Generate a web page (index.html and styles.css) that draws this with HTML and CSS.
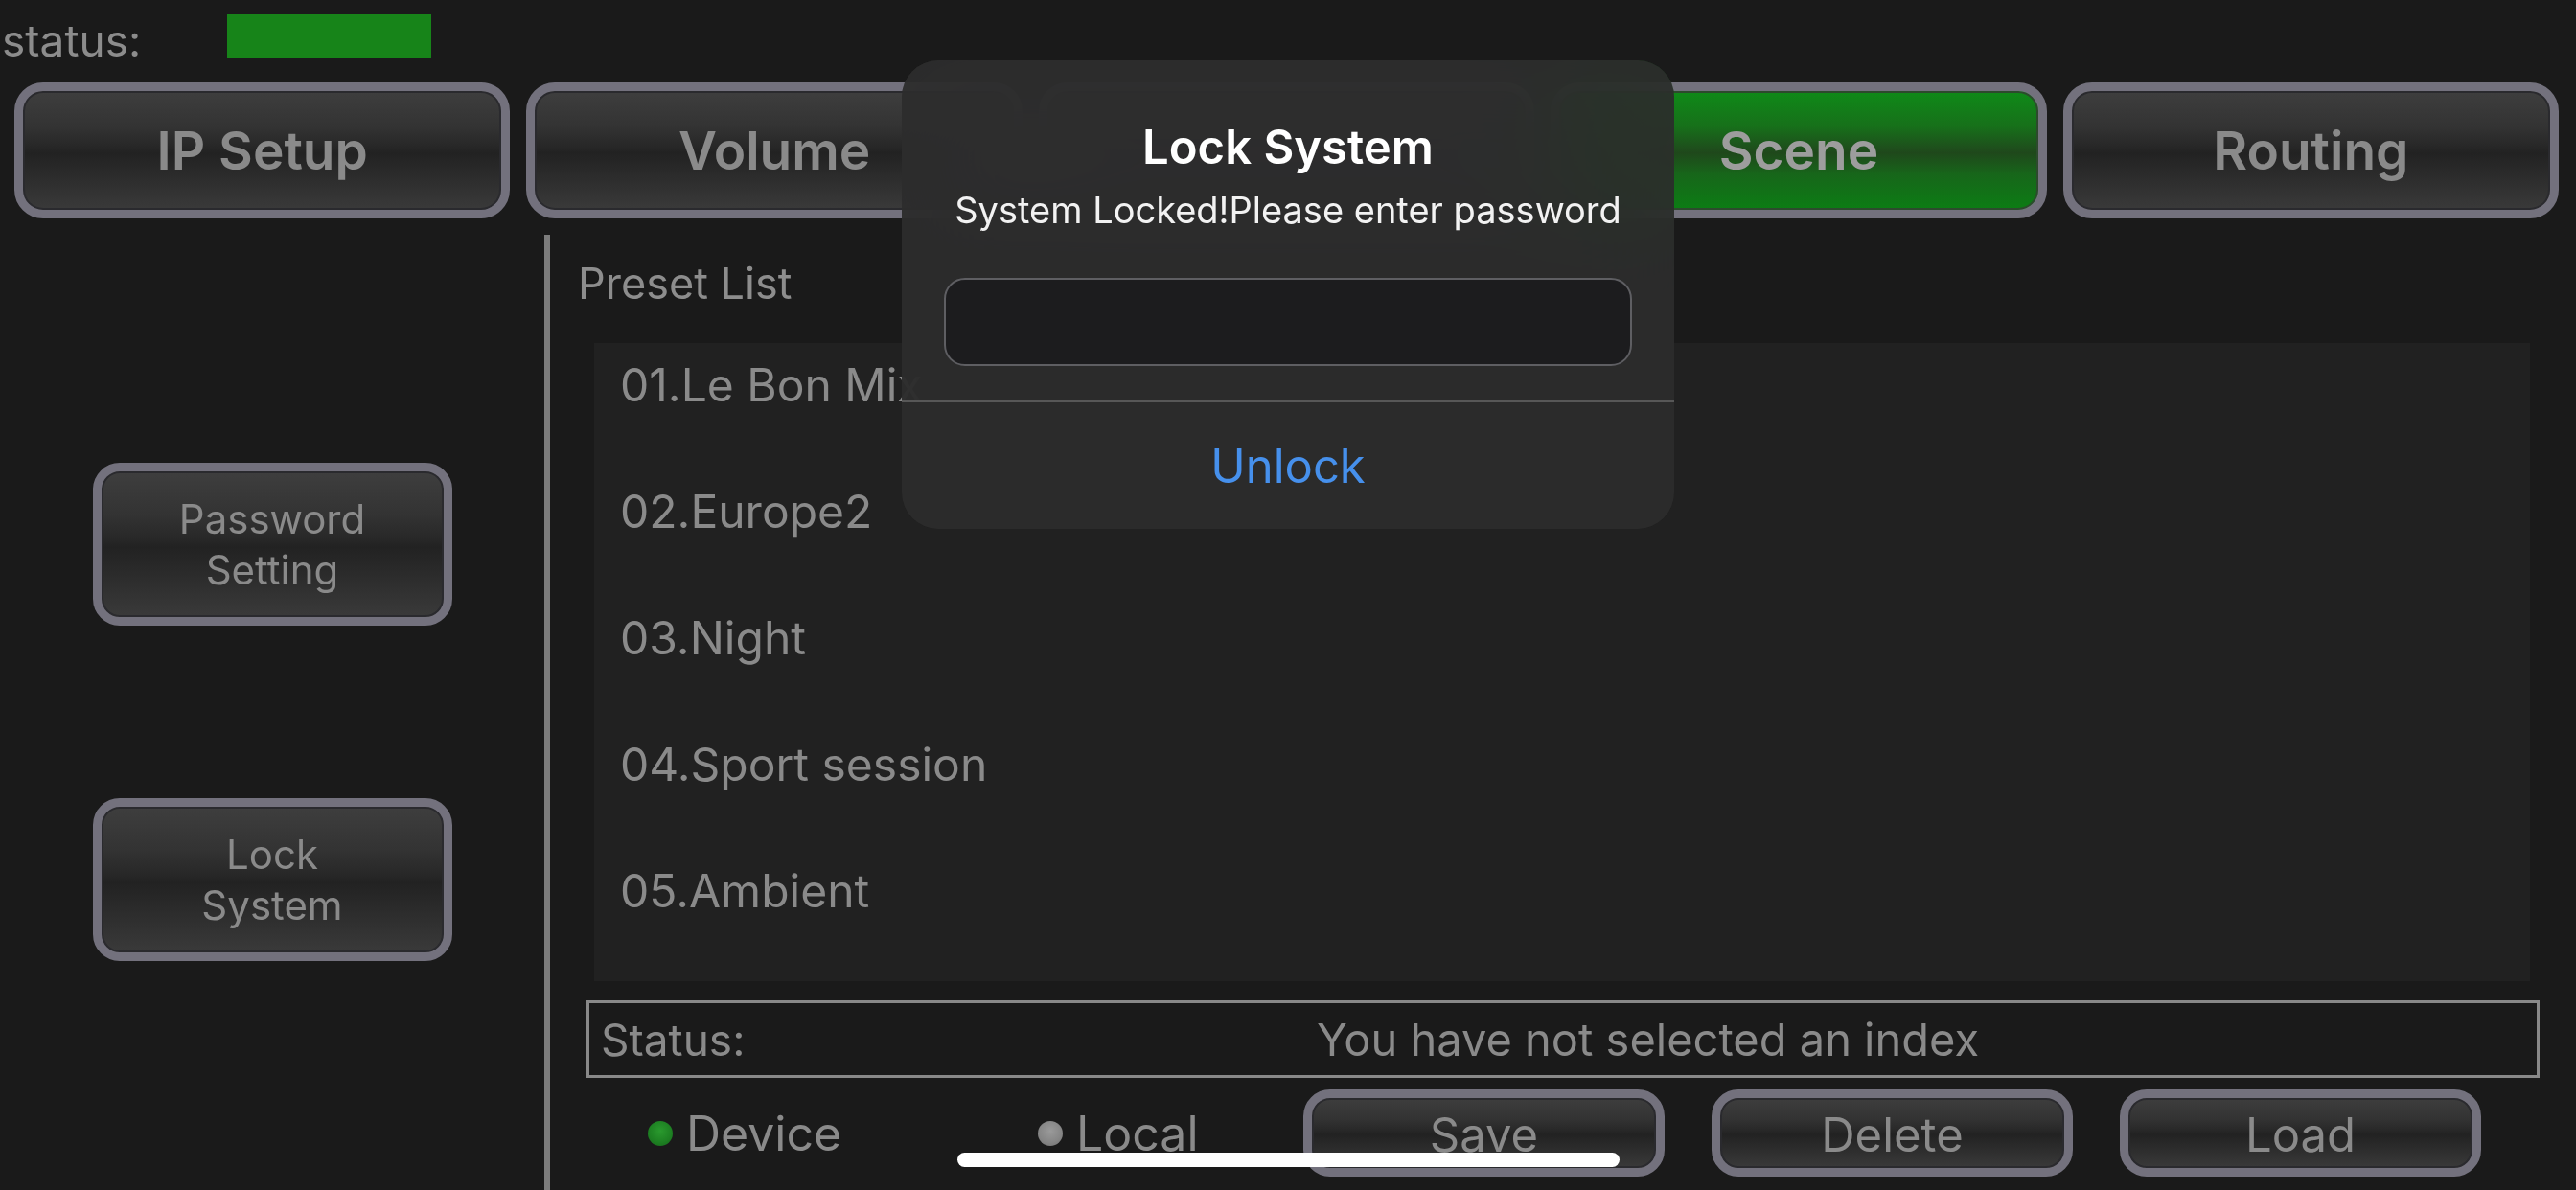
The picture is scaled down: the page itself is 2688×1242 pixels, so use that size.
FILE: index.html
```html
<!DOCTYPE html>
<html>
<head>
<meta charset="utf-8">
<link rel="stylesheet" href="styles.css">
</head>
<body>
<div class="screen">
  <div class="topbar">
    <span class="status-label">status:</span>
    <span class="status-led"></span>
  </div>
  <div class="tabs">
    <div class="gbtn tab">IP Setup</div>
    <div class="gbtn tab">Volume</div>
    <div class="gbtn tab"></div>
    <div class="gbtn tab tab-active">Scene</div>
    <div class="gbtn tab">Routing</div>
  </div>
  <div class="main">
    <div class="side">
      <div class="gbtn side-btn">Password<br>Setting</div>
      <div class="gbtn side-btn">Lock<br>System</div>
    </div>
    <div class="panel">
      <div class="panel-title">Preset List</div>
      <div class="list">
        <div class="row">01.Le Bon Mix</div>
        <div class="row">02.Europe2</div>
        <div class="row">03.Night</div>
        <div class="row">04.Sport session</div>
        <div class="row">05.Ambient</div>
      </div>
      <div class="status-box">
        <span class="sb-label">Status:</span>
        <span class="sb-msg">You have not selected an index</span>
      </div>
      <div class="bottom">
        <div class="radio radio-device"><span class="dot dot-on"></span><span>Device</span></div>
        <div class="radio radio-local"><span class="dot dot-off"></span><span>Local</span></div>
        <div class="gbtn act">Save</div>
        <div class="gbtn act">Delete</div>
        <div class="gbtn act">Load</div>
      </div>
    </div>
  </div>

  <div class="alert">
    <div class="alert-title">Lock System</div>
    <div class="alert-msg">System Locked!Please enter password</div>
    <div class="alert-field"></div>
    <div class="alert-sep"></div>
    <div class="alert-action">Unlock</div>
  </div>

  <div class="home-indicator"></div>
</div>
</body>
</html>
```

FILE: styles.css
```css
* { box-sizing: border-box; }
html, body {
  margin: 0;
  padding: 0;
  background: #1a1a1a;
}
body {
  font-family: Inter, "Liberation Sans", sans-serif;
  color: #8a8a8a;
}
.screen {
  position: relative;
  width: 2688px;
  height: 1242px;
  overflow: hidden;
  background: #1a1a1a;
}

/* top status */
.topbar {
  display: flex;
  align-items: flex-start;
  height: 86px;
  padding-left: 2px;
}
.status-label {
  width: 235px;
  margin-top: 19px;
  font-size: 46px;
  line-height: 46px;
  color: #8c8c8c;
}
.status-led {
  width: 213px;
  height: 46px;
  margin-top: 15px;
  background: #178419;
}

/* glossy buttons */
.gbtn {
  display: flex;
  align-items: center;
  justify-content: center;
  text-align: center;
  border: 9px solid #73717d;
  border-radius: 30px;
  background: linear-gradient(to bottom, #3e3e3e 0%, #333 30%, #272727 47%, #222 52%, #2b2b2b 70%, #3a3a3a 100%);
  box-shadow: inset 0 0 0 2px #2a2a2e;
  color: #8a8a8a;
}

.tabs {
  display: flex;
  gap: 17px;
  height: 142px;
  padding: 0 18px 0 15px;
}
.tab {
  flex: 1;
  font-size: 55px;
  font-weight: 600;
}
.tab-active {
  background: linear-gradient(to bottom, #0f8a18 0%, #17701a 30%, #1e4f1c 48%, #1f481b 52%, #17661a 70%, #0c7d14 100%);
  box-shadow: inset 0 0 0 2px #2d4a2d;
  color: #9d9d9d;
}

/* main */
.main {
  display: flex;
  margin-top: 17px;
  height: 997px;
}
.side {
  width: 568px;
  display: flex;
  flex-direction: column;
  align-items: center;
  padding-top: 238px;
  gap: 180px;
}
.side-btn {
  width: 375px;
  height: 170px;
  border-radius: 28px;
  font-size: 42px;
  line-height: 53px;
}
.panel {
  flex: 1;
  border-left: 6px solid #7c7c7c;
  padding: 0 38px 0 29px;
  display: flex;
  flex-direction: column;
}
.panel-title {
  margin-top: 24px;
  font-size: 45px;
  line-height: 54px;
  color: #8d8d8d;
}
.list {
  margin: 35px 10px 0 17px;
  height: 666px;
  background: #212121;
  overflow: hidden;
}
.row {
  height: 132px;
  padding: 14px 0 0 27px;
  font-size: 48px;
  line-height: 60px;
  color: #8a8a8a;
}
.status-box {
  margin: 20px 0 0 9px;
  height: 81px;
  border: 3px solid #898989;
  display: flex;
  align-items: center;
  font-size: 46px;
  color: #8a8a8a;
}
.sb-label {
  width: 177px;
  padding-left: 12px;
}
.sb-msg {
  flex: 1;
  text-align: center;
  font-size: 47px;
}
.bottom {
  display: flex;
  align-items: center;
  margin-top: 12px;
  height: 91px;
  padding-left: 73px;
}
.radio {
  display: flex;
  align-items: center;
  gap: 14px;
  font-size: 50px;
  color: #8a8a8a;
}
.radio-device { width: 407px; }
.radio-local { width: 277px; }
.dot {
  width: 26px;
  height: 26px;
  border-radius: 50%;
}
.dot-on { background: radial-gradient(circle at 50% 40%, #2a9a2e 0%, #1d7f22 60%, #16651a 100%); }
.dot-off { background: radial-gradient(circle at 50% 40%, #9a9a9a 0%, #858585 60%, #6e6e6e 100%); }
.act {
  width: 377px;
  height: 91px;
  margin-right: 49px;
  border-radius: 28px;
  font-size: 49px;
  padding-top: 4px;
}

/* alert overlay */
.alert {
  position: absolute;
  left: 941px;
  top: 63px;
  width: 806px;
  height: 489px;
  border-radius: 38px;
  background: rgba(44, 44, 44, 0.92);
  backdrop-filter: blur(50px) saturate(1.8);
  display: flex;
  flex-direction: column;
  align-items: center;
  padding-top: 61px;
  overflow: hidden;
}
.alert-title {
  font-size: 49px;
  line-height: 60px;
  font-weight: 600;
  color: #ffffff;
}
.alert-msg {
  margin-top: 11px;
  font-size: 38px;
  line-height: 48px;
  color: #f2f2f2;
}
.alert-field {
  margin-top: 47px;
  width: 718px;
  height: 92px;
  border-radius: 22px;
  border: 2px solid #5e5e62;
  background: #1c1c1e;
}
.alert-sep {
  margin-top: 36px;
  align-self: stretch;
  height: 2px;
  background: #575757;
}
.alert-action {
  flex: 1;
  align-self: stretch;
  display: flex;
  align-items: center;
  justify-content: center;
  font-size: 49px;
  color: #4690ec;
}

.home-indicator {
  position: absolute;
  left: 999px;
  top: 1203px;
  width: 691px;
  height: 15px;
  border-radius: 8px;
  background: #ffffff;
}
```
